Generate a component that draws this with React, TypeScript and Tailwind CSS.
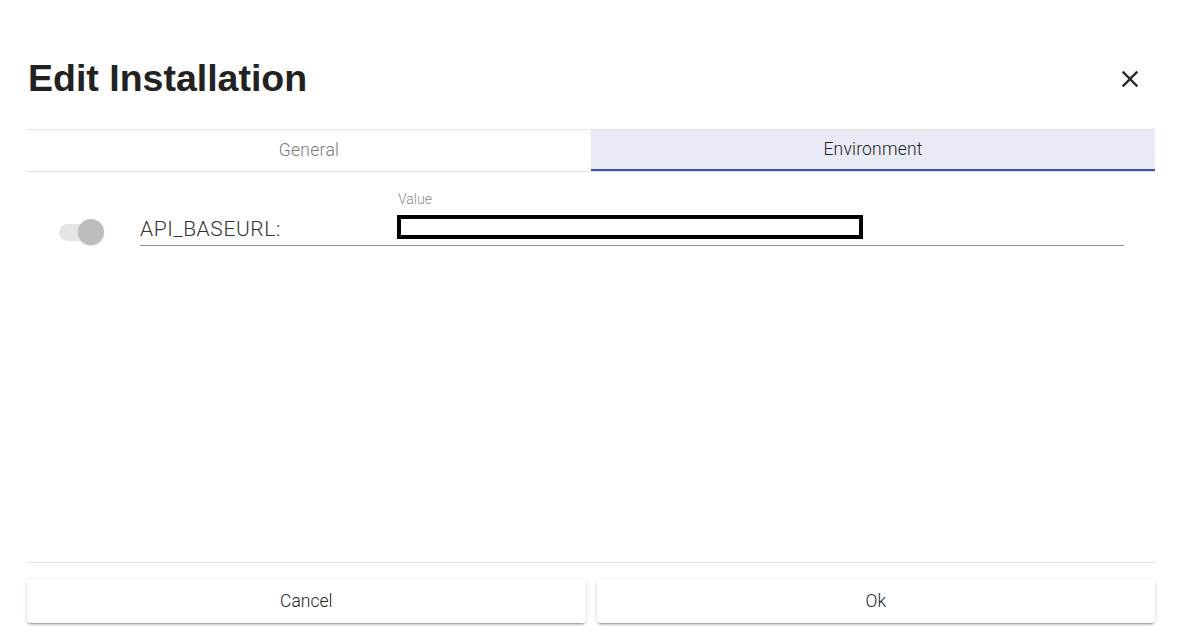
function Toggle() {
  return (
    <div className="relative w-[45px] h-[26px] flex items-center mb-[1px]">
      <div className="w-[40px] h-[17px] rounded-full bg-[#e6e6e6]" />
      <div className="absolute right-0 top-0 w-[26px] h-[26px] rounded-full bg-[#bdbdbd] shadow-[0_1px_2px_rgba(0,0,0,0.12)]" />
    </div>
  );
}

const btnShadow =
  'shadow-[0_3px_1px_-2px_rgba(0,0,0,0.2),0_2px_2px_0_rgba(0,0,0,0.14),0_1px_5px_0_rgba(0,0,0,0.12)]';

export default function App() {
  return (
    <div className="w-full h-screen bg-white flex flex-col pl-[27px] pr-[26px] font-['Roboto',sans-serif] text-[#333]">
      {/* Header */}
      <div className="flex items-center justify-between pt-[56px] pb-[29px]">
        <h1 className="font-['Liberation_Sans',Arial,sans-serif] font-bold text-[37.5px] leading-[44px] text-[#222] ml-[1px]">
          Edit Installation
        </h1>
        <button className="w-[28px] h-[28px] flex items-center justify-center mr-[11px] mt-[2px]">
          <svg viewBox="0 0 24 24" className="w-[28px] h-[28px] fill-[#2a2a2a]">
            <path d="M19 6.41 17.59 5 12 10.59 6.41 5 5 6.41 10.59 12 5 17.59 6.41 19 12 13.41 17.59 19 19 17.59 13.41 12z" />
          </svg>
        </button>
      </div>

      {/* Tabs */}
      <div className="grid grid-cols-2 border-t border-b border-[#e2e2e2] h-[43px]">
        <div className="flex items-center justify-center text-[17.5px] font-light tracking-[0.3px] text-[#7a7a7a]">
          General
        </div>
        <div className="flex items-center justify-center text-[17.5px] font-light tracking-[0.2px] text-[#222] bg-[#e8eaf6] border-b-2 border-[#3f51b5]">
          Environment
        </div>
      </div>

      {/* Content */}
      <div className="flex-1">
        <div className="flex items-end pl-[32px] pr-[31px] pt-[19px]">
          <Toggle />
          <div className="flex-1 ml-[36px] flex items-end border-b border-[#949494] pb-[3px]">
            <div className="w-[257px] text-[21px] leading-[26px] font-light tracking-[0.6px] text-[#333]">
              API_BASEURL:
            </div>
            <div className="flex flex-col mb-[3px]">
              <div className="text-[14px] leading-[16px] font-light text-[#8a8a8a] pl-[1px] mb-[8px]">Value</div>
              <div className="w-[466px] h-[24px] border-4 border-black bg-white" />
            </div>
          </div>
        </div>
      </div>

      {/* Footer */}
      <div className="border-t border-[#e2e2e2] pt-[16px] pb-[11px] flex gap-[11px]">
        <button className={`flex-1 h-[44px] rounded-[4px] bg-white text-[17.5px] font-light text-[#222] ${btnShadow}`}>
          Cancel
        </button>
        <button className={`flex-1 h-[44px] rounded-[4px] bg-white text-[17.5px] font-light text-[#222] ${btnShadow}`}>
          Ok
        </button>
      </div>
    </div>
  );
}
